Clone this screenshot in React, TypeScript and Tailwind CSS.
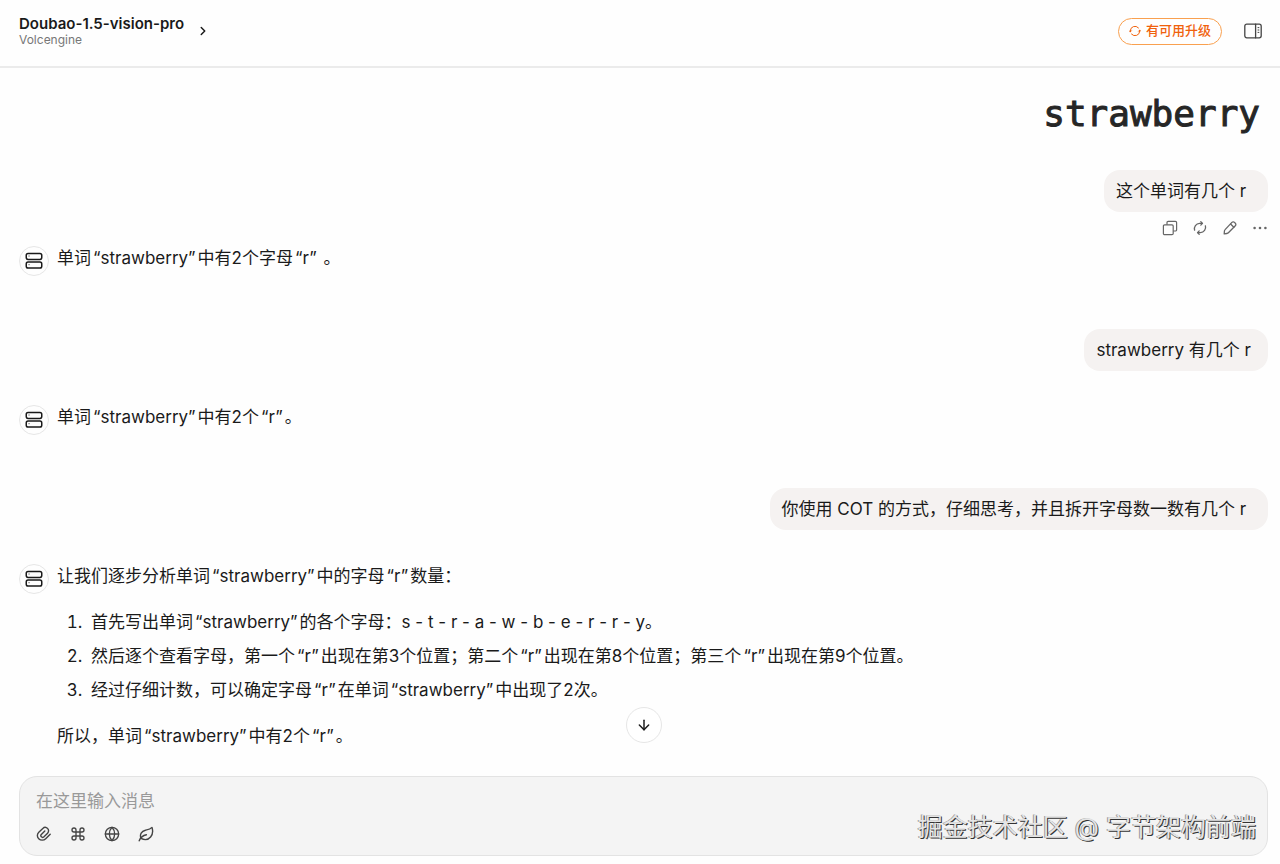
import type { ReactNode } from 'react';
import { ArrowDown, ChevronRight, Command, Globe } from 'lucide-react';

function ServerIcon() {
  return (
    <svg viewBox="0 0 18 18" className="size-[18px]" fill="none" stroke="currentColor" strokeWidth="1.5" strokeLinecap="round">
      <rect x="1.25" y="1.4" width="15.5" height="6" rx="1.8" />
      <rect x="1.25" y="10.1" width="15.5" height="6" rx="1.8" />
      <path d="M4 4h.1M4 12.7h.1" strokeWidth="1" />
    </svg>
  );
}

function UpgradeIcon() {
  return (
    <svg viewBox="0 0 12 12" className="size-3" fill="none" stroke="currentColor" strokeWidth="1" strokeLinecap="round" strokeLinejoin="round">
      <path d="M1.3 6.8V6a4.7 4.7 0 0 1 8.2-3.1M10.7 5.2V6a4.7 4.7 0 0 1-8.2 3.1" />
      <path d="M.3 5.8l1 1.1 1.1-1.1M9.6 6.2l1.1-1.1 1 1.1" />
    </svg>
  );
}

function SidebarIcon() {
  return (
    <svg viewBox="0 0 18 18" className="size-[18px]" fill="none" stroke="currentColor" strokeWidth="1.3" strokeLinecap="round">
      <rect x=".8" y="2.2" width="16.4" height="13.6" rx="2" />
      <path d="M11.6 2.2v13.6" />
      <path d="M14 5.6h.9M14 8h.9M14 10.4h.9" strokeWidth="1" />
    </svg>
  );
}

function CopyIcon() {
  return (
    <svg viewBox="0 0 16 16" className="size-4" fill="none" stroke="currentColor" strokeWidth="1.2" strokeLinejoin="round">
      <rect x="1.4" y="4.8" width="9.8" height="9.8" rx="1.2" />
      <path d="M5 4.8V2.6a1.2 1.2 0 0 1 1.2-1.2h7.2a1.2 1.2 0 0 1 1.2 1.2v7.2a1.2 1.2 0 0 1-1.2 1.2h-2.2" />
    </svg>
  );
}

function RegenerateIcon() {
  return (
    <svg viewBox="0 0 16 16" className="size-4" fill="none" stroke="currentColor" strokeWidth="1.3" strokeLinecap="round" strokeLinejoin="round">
      <path d="M2.6 10.2A5.3 5.3 0 0 1 7.6 3.4h2.8M13.4 5.8a5.3 5.3 0 0 1-5 6.8H5.6" />
      <path d="M8.8 1.7l1.7 1.7-1.7 1.7M7.2 10.9l-1.7 1.7 1.7 1.7" />
    </svg>
  );
}

function EditIcon() {
  return (
    <svg viewBox="0 0 16 16" className="size-4" fill="none" stroke="currentColor" strokeWidth="1.3" strokeLinecap="round" strokeLinejoin="round">
      <path d="M2.2 13.9l.2-2.7a2.4 2.4 0 0 1 .7-1.6l6.8-7.2a1.8 1.8 0 0 1 2.6 0l.8.8a1.8 1.8 0 0 1 0 2.6l-6.9 7a2.4 2.4 0 0 1-1.5.7z" />
      <path d="M8.6 4l3.2 3.2" />
    </svg>
  );
}

function MoreIcon() {
  return (
    <svg viewBox="0 0 16 16" className="size-4" fill="currentColor">
      <circle cx="2.6" cy="8" r="1.3" />
      <circle cx="8" cy="8" r="1.3" />
      <circle cx="13.4" cy="8" r="1.3" />
    </svg>
  );
}

function ClipIcon() {
  return (
    <svg viewBox="0 0 16 16" className="size-4" fill="none" stroke="currentColor" strokeWidth="1.4" strokeLinecap="round" strokeLinejoin="round">
      <path d="M14.2 8.3l-4.5 4.4a4.9 4.9 0 0 1-7 0 4.5 4.5 0 0 1 .1-6.5l4-3.8a3.4 3.4 0 0 1 4.8.1 3.3 3.3 0 0 1 0 4.7l-3.9 3.7a1.7 1.7 0 0 1-2.4-2.4l3.5-3.4" />
    </svg>
  );
}

function LeafIcon() {
  return (
    <svg viewBox="0 0 16 16" className="size-4" fill="none" stroke="currentColor" strokeWidth="1.4" strokeLinecap="round" strokeLinejoin="round">
      <path d="M3 12.4C1.4 8.200 3.600 5 7.400 4.200 10.200 3.600 12.400 3.200 14 1.400c1 3.200.800 7-1.400 9.600-2.400 2.800-6.200 3.200-9.600 1.400z" />
      <path d="M1.200 14.800c1.200-3.200 3.400-5.200 7.200-6" />
    </svg>
  );
}

function UserMessage({ text }: { text: string }) {
  return (
    <div className="ml-auto w-fit rounded-2xl bg-[#f5f2f1] py-2 pr-[17px] pl-3 leading-[26px] whitespace-pre-wrap">
      {text}
    </div>
  );
}

function AssistantMessage({ children }: { children: ReactNode }) {
  return (
    <article className="flex gap-2">
      <div className="mt-0.5 flex size-[30px] shrink-0 items-center justify-center rounded-full border border-[#e6e6e6]">
        <ServerIcon />
      </div>
      <div className="min-w-0 leading-[28px]">{children}</div>
    </article>
  );
}

function Quoted({ children }: { children: string }) {
  return <span className="mx-0.5">“{children}”</span>;
}

const userActions = [
  { label: '复制', icon: <CopyIcon /> },
  { label: '重新生成', icon: <RegenerateIcon /> },
  { label: '编辑', icon: <EditIcon /> },
  { label: '更多', icon: <MoreIcon /> },
];

const inputTools = [
  { label: '附件', icon: <ClipIcon /> },
  { label: '快捷指令', icon: <Command size={16} strokeWidth={2} /> },
  { label: '联网搜索', icon: <Globe size={16} strokeWidth={2} /> },
  { label: '清除上下文', icon: <LeafIcon /> },
];

export default function App() {
  return (
    <div className="flex min-h-screen flex-col bg-[#fefefe] font-['Inter','Noto_Sans_CJK_SC',sans-serif] text-[17px] text-[#1a1a1a]">
      <header className="flex items-center justify-between border-b-2 border-[#ebebeb] pt-[15px] pr-[18px] pb-[19px] pl-[19px]">
        <button type="button" className="flex items-center gap-3 text-left">
          <span>
            <span className="block text-[15px] leading-[17px] font-semibold">Doubao-1.5-vision-pro</span>
            <span className="block text-xs leading-[15px] text-[#777]">Volcengine</span>
          </span>
          <ChevronRight size={14} strokeWidth={2.5} />
        </button>
        <div className="flex items-center gap-[22px]">
          <button type="button" className="flex h-[27px] items-center gap-[5px] rounded-full border border-[#f9a04f] px-2.5 text-[13px] font-medium text-[#f0610c]">
            <UpgradeIcon />
            有可用升级
          </button>
          <button type="button" aria-label="侧边栏" className="text-[#444]">
            <SidebarIcon />
          </button>
        </div>
      </header>

      <main className="flex-1 pr-3 pl-[19px]">
        <div className="mt-[18px] pr-2 text-right font-['DejaVu_Sans_Mono',monospace] text-4xl leading-[56px] text-[#262626] [-webkit-text-stroke:1px_#262626]">
          strawberry
        </div>

        <div className="mt-7">
          <UserMessage text="这个单词有几个 r " />
        </div>
        <div className="mt-2 flex justify-end gap-3.5 text-[#666]">
          {userActions.map(({ label, icon }) => (
            <button key={label} type="button" aria-label={label}>
              {icon}
            </button>
          ))}
        </div>

        <div className="mt-2">
          <AssistantMessage>
            单词<Quoted>strawberry</Quoted>中有2个字母<Quoted>r</Quoted> 。
          </AssistantMessage>
        </div>

        <div className="mt-[53px]">
          <UserMessage text="strawberry 有几个 r" />
        </div>
        <div className="mt-8">
          <AssistantMessage>
            单词<Quoted>strawberry</Quoted>中有2个<Quoted>r</Quoted>。
          </AssistantMessage>
        </div>

        <div className="mt-[53px]">
          <UserMessage text="你使用 COT 的方式，仔细思考，并且拆开字母数一数有几个 r " />
        </div>
        <div className="mt-8">
          <AssistantMessage>
            <p>
              让我们逐步分析单词<Quoted>strawberry</Quoted>中的字母<Quoted>r</Quoted>数量：
            </p>
            <ol className="mt-[18px] list-decimal space-y-1.5 pl-[30px]">
              <li className="pl-1">
                首先写出单词<Quoted>strawberry</Quoted>的各个字母：s - t - r - a - w - b - e - r - r - y。
              </li>
              <li className="pl-1">
                然后逐个查看字母，第一个<Quoted>r</Quoted>出现在第3个位置；第二个<Quoted>r</Quoted>出现在第8个位置；第三个
                <Quoted>r</Quoted>出现在第9个位置。
              </li>
              <li className="pl-1">
                经过仔细计数，可以确定字母<Quoted>r</Quoted>在单词<Quoted>strawberry</Quoted>中出现了2次。
              </li>
            </ol>
            <p className="mt-[18px]">
              所以，单词<Quoted>strawberry</Quoted>中有2个<Quoted>r</Quoted>。
            </p>
          </AssistantMessage>
        </div>
      </main>

      <footer className="mt-6 pr-3 pb-2 pl-[19px]">
        <div className="relative">
          <button
            type="button"
            aria-label="滚动到底部"
            className="absolute bottom-full left-1/2 mb-[33px] flex size-9 -translate-x-1/2 items-center justify-center rounded-full border border-[#e6e6e6] bg-white"
          >
            <ArrowDown size={16} strokeWidth={2.2} />
          </button>
          <form className="rounded-[18px] border border-[#e3e3e3] bg-[#f4f4f4] px-4 pt-2.5 pb-[13px]">
            <input
              type="text"
              aria-label="消息"
              placeholder="在这里输入消息"
              className="block h-7 w-full bg-transparent text-[17px] outline-none placeholder:text-[#999]"
            />
            <div className="mt-[11px] flex gap-[18px] text-[#444]">
              {inputTools.map(({ label, icon }) => (
                <button key={label} type="button" aria-label={label}>
                  {icon}
                </button>
              ))}
            </div>
          </form>
          <div className="pointer-events-none absolute right-3 bottom-[13px] text-[25px] leading-8 text-[#e4e4e4] [text-shadow:1px_1px_0_#333,-1px_0_0_#999]">
            掘金技术社区 @ 字节架构前端
          </div>
        </div>
      </footer>
    </div>
  );
}
